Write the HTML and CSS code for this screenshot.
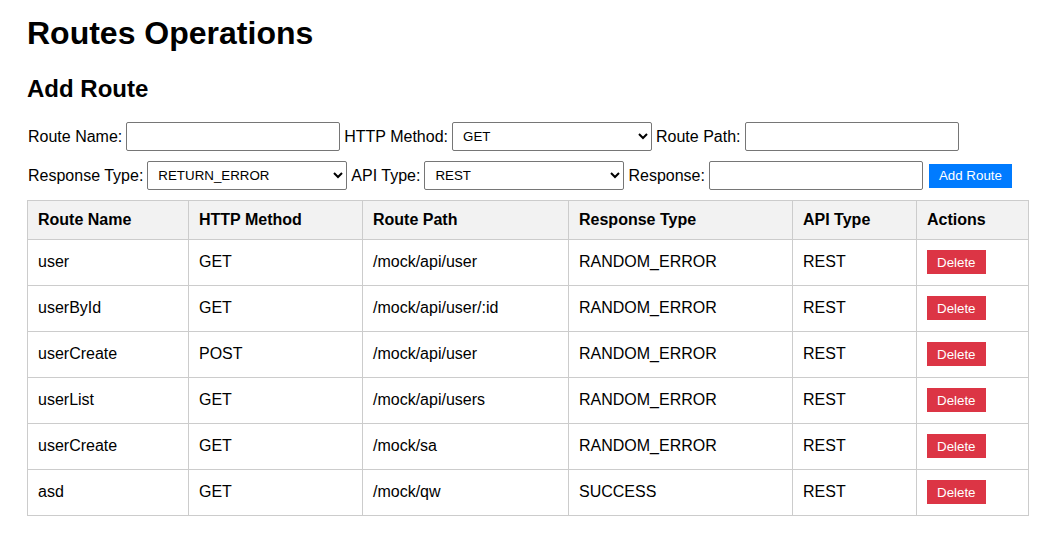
FILE: index.html
```html
<!DOCTYPE html>
<html lang="en">
<head>
<meta charset="utf-8">
<title>Routes Operations</title>
<link rel="stylesheet" href="styles.css">
</head>
<body>
<div class="page">
  <h1 class="title">Routes Operations</h1>
  <h2 class="subtitle">Add Route</h2>
  <form class="route-form">
    <div class="form-row">
      <label class="lbl">Route Name:</label>
      <input class="field" type="text">
      <label class="lbl">HTTP Method:</label>
      <select class="picker"><option>GET</option><option>POST</option></select>
      <label class="lbl">Route Path:</label>
      <input class="field" type="text">
    </div>
    <div class="form-row">
      <label class="lbl">Response Type:</label>
      <select class="picker"><option>RETURN_ERROR</option><option>SUCCESS</option></select>
      <label class="lbl">API Type:</label>
      <select class="picker"><option>REST</option></select>
      <label class="lbl">Response:</label>
      <input class="field" type="text">
      <button class="btn btn-add" type="button">Add Route</button>
    </div>
  </form>
  <table class="routes">
    <colgroup>
      <col class="c1"><col class="c2"><col class="c3"><col class="c4"><col class="c5"><col class="c6">
    </colgroup>
    <thead>
      <tr><th>Route Name</th><th>HTTP Method</th><th>Route Path</th><th>Response Type</th><th>API Type</th><th>Actions</th></tr>
    </thead>
    <tbody>
      <tr><td>user</td><td>GET</td><td>/mock/api/user</td><td>RANDOM_ERROR</td><td>REST</td><td><button class="btn btn-del" type="button">Delete</button></td></tr>
      <tr><td>userById</td><td>GET</td><td>/mock/api/user/:id</td><td>RANDOM_ERROR</td><td>REST</td><td><button class="btn btn-del" type="button">Delete</button></td></tr>
      <tr><td>userCreate</td><td>POST</td><td>/mock/api/user</td><td>RANDOM_ERROR</td><td>REST</td><td><button class="btn btn-del" type="button">Delete</button></td></tr>
      <tr><td>userList</td><td>GET</td><td>/mock/api/users</td><td>RANDOM_ERROR</td><td>REST</td><td><button class="btn btn-del" type="button">Delete</button></td></tr>
      <tr><td>userCreate</td><td>GET</td><td>/mock/sa</td><td>RANDOM_ERROR</td><td>REST</td><td><button class="btn btn-del" type="button">Delete</button></td></tr>
      <tr><td>asd</td><td>GET</td><td>/mock/qw</td><td>SUCCESS</td><td>REST</td><td><button class="btn btn-del" type="button">Delete</button></td></tr>
    </tbody>
  </table>
</div>
</body>
</html>
```
FILE: styles.css
```css
html, body {
  margin: 0;
  padding: 0;
  background: #fff;
  color: #000;
  font-family: "Liberation Sans", Arial, sans-serif;
  font-size: 16px;
}
.page {
  padding: 0 23px 0 27px;
}
.title {
  font-size: 32px;
  font-weight: bold;
  margin: 15px 0 23px 0;
}
.subtitle {
  font-size: 24px;
  font-weight: bold;
  margin: 0 0 19px 0;
}
.route-form {
  margin: 0 0 10px 1px;
}
.form-row {
  display: flex;
  align-items: center;
  gap: 4px;
  height: 29px;
  margin-bottom: 10px;
}
.form-row:last-child {
  margin-bottom: 0;
}
.lbl {
  font-size: 16px;
  color: #000;
  white-space: nowrap;
}
.field {
  box-sizing: border-box;
  width: 214px;
  height: 29px;
  border: 1px solid #767676;
  border-radius: 2px;
  padding: 2px 6px;
  font-family: "Liberation Sans", Arial, sans-serif;
  font-size: 13.33px;
  background: #fff;
}
.picker {
  box-sizing: border-box;
  width: 200px;
  height: 29px;
  border: 1px solid #767676;
  border-radius: 2px;
  padding: 0 6px;
  font-family: "Liberation Sans", Arial, sans-serif;
  font-size: 13.33px;
  color: #000;
  background: #fff;
}
.btn {
  border: none;
  color: #fff;
  font-family: "Liberation Sans", Arial, sans-serif;
  font-size: 13.33px;
  padding: 0 10px;
  height: 24px;
  cursor: pointer;
}
.btn-add {
  background: #007bff;
  margin-left: 2px;
}
.btn-del {
  background: #dc3545;
  display: block;
}
.routes {
  width: 1002px;
  border-collapse: collapse;
  table-layout: fixed;
}
.c1 { width: 161px; }
.c2 { width: 174px; }
.c3 { width: 206px; }
.c4 { width: 224px; }
.c5 { width: 124px; }
.c6 { width: 112px; }
.routes th, .routes td {
  border: 1px solid #ccc;
  padding: 10px;
  text-align: left;
  font-size: 16px;
  line-height: 18px;
}
.routes th {
  background: #f2f2f2;
  font-weight: bold;
}
.routes td {
  height: 24px;
  vertical-align: top;
}
.routes td:not(:last-child) {
  padding-top: 13px;
  padding-bottom: 8px;
}
```
